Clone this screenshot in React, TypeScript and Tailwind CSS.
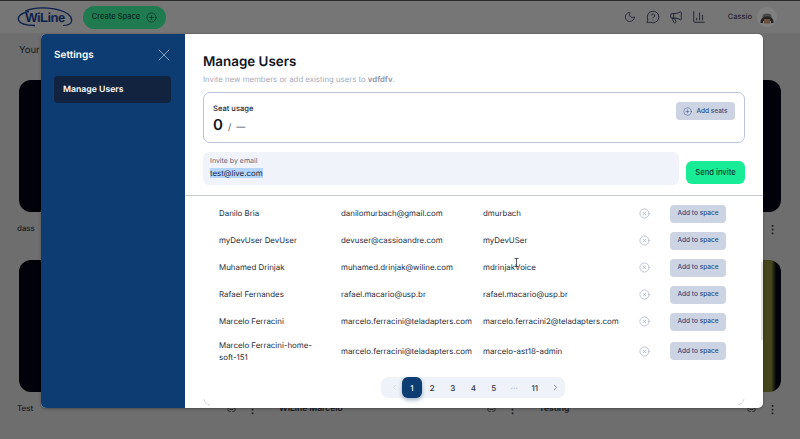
import { ChartColumn, ChevronLeft, ChevronRight, CirclePlus, CircleX, Link2, Megaphone, MessageCircleQuestion, Moon, X } from "lucide-react"

const users = [
  { name: "Danilo Bria", email: "danilomurbach@gmail.com", login: "dmurbach" },
  { name: "myDevUser DevUser", email: "devuser@cassioandre.com", login: "myDevUSer" },
  { name: "Muhamed Drinjak", email: "muhamed.drinjak@wiline.com", login: "mdrinjakVoice" },
  { name: "Rafael Fernandes", email: "rafael.macario@usp.br", login: "rafael.macario@usp.br" },
  { name: "Marcelo Ferracini", email: "marcelo.ferracini@teladapters.com", login: "marcelo.ferracini2@teladapters.com" },
  { name: "Marcelo Ferracini-home-soft-151", email: "marcelo.ferracini@teladapters.com", login: "marcelo-ast18-admin" },
]

function Logo() {
  return (
    <div className="relative w-[56px] h-[22px] flex items-center justify-center">
      <svg viewBox="0 0 56 22" className="absolute inset-0 w-[56px] h-[22px]" fill="none">
        <path d="M12 5.500C4 7 .5 10.500 1.500 14 3 18 11 19.500 18 19.500" stroke="#0d1f4d" strokeWidth="1.400" />
        <path d="M8 5C22 -.5 42 2 51 8c5 4 5 9-.5 11" stroke="#0d1f4d" strokeWidth="1.200" />
        <path d="M46 19.500c2 0 4-.3 5.500-1" stroke="#0d1f4d" strokeWidth="1" />
      </svg>
      <span className="relative text-[13px] leading-none font-bold tracking-[-0.5px] text-[#0d1f4d] font-['Liberation_Sans',sans-serif]">WiLine</span>
    </div>
  )
}

function Avatar() {
  return (
    <div className="w-[20px] h-[20px] rounded-full bg-[#808080] overflow-hidden">
      <svg viewBox="0 0 20 20" className="w-[20px] h-[20px]">
        <ellipse cx="10" cy="9.500" rx="4.500" ry="3" fill="#4a4a4a" />
        <path d="M3.500 15c0-4 3-5.500 6.500-5.500s6.500 1.500 6.500 5.500v1h-2.500v-2h-8v2H3.500z" fill="#222" />
        <rect x="7" y="12" width="6" height="4.500" fill="#6b5140" />
      </svg>
    </div>
  )
}

function Header() {
  return (
    <header className="h-[33px] border-t border-[#2a2a2a] bg-[#767676] flex items-center pl-[17px] pr-[23px]">
      <Logo />
      <button className="ml-[10px] w-[83px] h-[23px] rounded-full bg-[#1f7a50] flex items-center justify-center gap-[6px] text-[#0c2a20] text-[7.500px] font-medium">
        Create Space
        <CirclePlus size={11} strokeWidth={1.500} />
      </button>
      <div className="ml-auto flex items-center text-[#1d2233]">
        <Moon size={12} strokeWidth={1.600} />
        <MessageCircleQuestion size={14} strokeWidth={1.600} className="ml-[10px]" />
        <Megaphone size={14} strokeWidth={1.600} className="ml-[9px]" />
        <ChartColumn size={14} strokeWidth={1.600} className="ml-[9px]" />
        <span className="ml-[22px] text-[7.500px] text-[#1f2433] font-medium">Cassio</span>
        <div className="ml-[5px]">
          <Avatar />
        </div>
      </div>
    </header>
  )
}

function SpaceCard({ title, tone, first }: { title?: string; tone: string; first?: boolean }) {
  return (
    <div>
      <div className={`h-[132px] rounded-[12px] ${tone}`} />
      <div className="mt-[11px] flex items-center h-[12px] text-[#1a1c22]">
        <span className={first ? "-ml-[2px] text-[7.900px] font-medium" : "text-[8.500px] font-semibold"}>{title}</span>
        <Link2 size={9} className="ml-auto" />
        <span className="ml-[11px] mr-[3px] text-[11px] leading-none font-bold">⋮</span>
      </div>
    </div>
  )
}

function Background() {
  return (
    <main className="flex-1 bg-[#6e6e6e] px-[19px]">
      <p className="pt-[10px] text-[9.500px] leading-[16px] text-[#17191f]">Your</p>
      <div className="mt-[21px] grid grid-cols-3 gap-x-[18px] gap-y-[25px]">
        <SpaceCard title="dass" tone="bg-[#01010a]" first />
        <SpaceCard tone="bg-[#01010a]" />
        <SpaceCard tone="bg-[#01010a]" />
        <SpaceCard title="Test" tone="bg-[#01010a]" first />
        <SpaceCard title="WiLine Marcelo" tone="bg-[#01010a]" />
        <SpaceCard title="Testing" tone="bg-[linear-gradient(90deg,#45451c_96%,#01010a_98%)]" />
      </div>
    </main>
  )
}

function UserRow({ name, email, login }: { name: string; email: string; login: string }) {
  return (
    <div className="flex items-center min-h-[27px] py-[4px] text-[7.900px] text-[#262b3c]">
      <div className="w-[122px] pr-[20px] pt-[1px] shrink-0 leading-[11.500px]">{name}</div>
      <div className="w-[142px] pt-[1px] shrink-0">{email}</div>
      <div className="w-[156px] pt-[1px] shrink-0 whitespace-nowrap">{login}</div>
      <CircleX size={11} strokeWidth={1.200} className="text-[#8d9ab8] shrink-0" />
      <button className="ml-[20px] w-[56px] h-[18px] pt-[1px] rounded-[4px] bg-[#ccd4e4] text-[#2d4a7c] text-[6.500px] font-medium shrink-0">
        Add to space
      </button>
    </div>
  )
}

function Pagination() {
  const pages = ["2", "3", "4", "5", "···", "11"]
  return (
    <div className="mx-auto w-[184px] h-[21px] rounded-[7px] bg-[#eff3f9] flex items-center pl-[5px] text-[#2b3144] text-[8px] font-medium">
      <div className="w-[16px] flex justify-center">
        <ChevronLeft size={9} className="text-[#ccd3e0]" />
      </div>
      <div className="w-[20px] h-[21px] rounded-[6px] bg-[#0c3c72] text-white flex items-center justify-center shadow-[0_2px_4px_rgba(12,60,114,0.4)]">
        1
      </div>
      {pages.map((p) => (
        <div key={p} className={`w-[20.500px] flex justify-center ${p === "···" ? "text-[#a9b2c4]" : ""}`}>
          {p}
        </div>
      ))}
      <div className="w-[20px] flex justify-center">
        <ChevronRight size={9} className="text-[#5d667c]" />
      </div>
    </div>
  )
}

function SettingsModal() {
  return (
    <div className="absolute left-[41px] top-[34px] w-[722px] h-[374px] rounded-[5px] overflow-hidden bg-white flex shadow-[0_1px_3px_rgba(0,0,0,0.3)]">
      <aside className="w-[144px] bg-[#0c3c72] pl-[13px] pr-[14px] pt-[13px] shrink-0">
        <div className="h-[16px] flex items-center justify-between text-white">
          <span className="text-[10px] leading-[16px] font-semibold">Settings</span>
          <X size={20} strokeWidth={0.800} className="text-[#c5d0df] -mr-[3px]" />
        </div>
        <div className="mt-[13px] h-[27px] pt-[2px] rounded-[4px] bg-[#12233f] pl-[9px] flex items-center text-[8.700px] font-semibold text-white">
          Manage Users
        </div>
      </aside>
      <div className="flex-1 flex flex-col relative">
        <div className="px-[18px] pt-[18px] h-[162px] border-b border-[#c9ccd3] shrink-0">
          <h2 className="text-[13.400px] leading-[20px] font-semibold text-[#12161f]">Manage Users</h2>
          <p className="mt-[1px] text-[7.800px] leading-[12px] text-[#a3abbd]">
            Invite new members or add existing users to <span className="font-semibold text-[#8c94a8]">vdfdfv</span>.
          </p>
          <div className="mt-[7px] h-[51px] rounded-[7px] border border-[#b9c3d9] pl-[9px] pr-[9px] pt-[9px] flex justify-between">
            <div>
              <div className="mt-[1px] text-[7.600px] leading-[12px] text-[#262b3c] font-medium">Seat usage</div>
              <div className="mt-[1px] flex items-baseline text-[#12161f]">
                <span className="text-[15px] leading-[18px] font-semibold">0</span>
                <span className="ml-[5px] text-[9px] text-[#4a5166]">/</span>
                <span className="ml-[5px] text-[9px] text-[#4a5166]">—</span>
              </div>
            </div>
            <button className="w-[59px] h-[18px] rounded-[4px] bg-[#ccd4e4] flex items-center justify-center gap-[4px] text-[#2d4a7c] text-[6.500px] font-medium">
              <CirclePlus size={9} strokeWidth={1.200} />
              <span className="pt-[2px]">Add seats</span>
            </button>
          </div>
          <div className="mt-[9px] flex items-end gap-[7px]">
            <div className="flex-1 h-[33px] rounded-[6px] bg-[#f0f4fa] pl-[7px] pt-[4px]">
              <div className="text-[7px] leading-[10px] text-[#5d667c]">Invite by email</div>
              <div className="mt-[1px] text-[7.900px] leading-[12px] text-[#1f2638]">
                <span className="bg-[#b4d5fe]">test@live.com</span>
              </div>
            </div>
            <button className="w-[59px] h-[23px] mb-[1px] rounded-[6px] bg-[#18ec96] text-[#0d3a2c] text-[7.600px] font-medium">
              Send invite
            </button>
          </div>
        </div>
        <div className="pl-[34px] pr-[36px] pt-[4px]">
          {users.map((u) => (
            <UserRow key={u.name} {...u} />
          ))}
          <div className="mt-[10px]">
            <Pagination />
          </div>
        </div>
        <div className="absolute right-0 top-[228px] w-[2px] h-[78px] bg-[#e4e4e4]" />
        <svg viewBox="0 0 8 8" className="absolute left-[18px] bottom-[2px] w-[8px] h-[8px]" fill="none">
          <path d="M1 1c.5 3 3 5.500 6 6" stroke="#d5d9e2" />
        </svg>
        <svg viewBox="0 0 8 8" className="absolute right-[18px] bottom-[2px] w-[8px] h-[8px]" fill="none">
          <path d="M7 1c-.5 3-3 5.500-6 6" stroke="#d5d9e2" />
        </svg>
        {/* text cursor caught in the capture */}
        <svg viewBox="0 0 5 9" className="absolute left-[329px] top-[224px] w-[5px] h-[9px]" fill="none">
          <path d="M.5.500h4M2.500.500v8M.5 8.500h4" stroke="#2b3144" strokeWidth="0.800" />
        </svg>
      </div>
    </div>
  )
}

export default function App() {
  return (
    <div className="relative w-[800px] h-[439px] overflow-hidden flex flex-col font-['Inter',sans-serif] [text-rendering:geometricPrecision]">
      <Header />
      <Background />
      <SettingsModal />
    </div>
  )
}
